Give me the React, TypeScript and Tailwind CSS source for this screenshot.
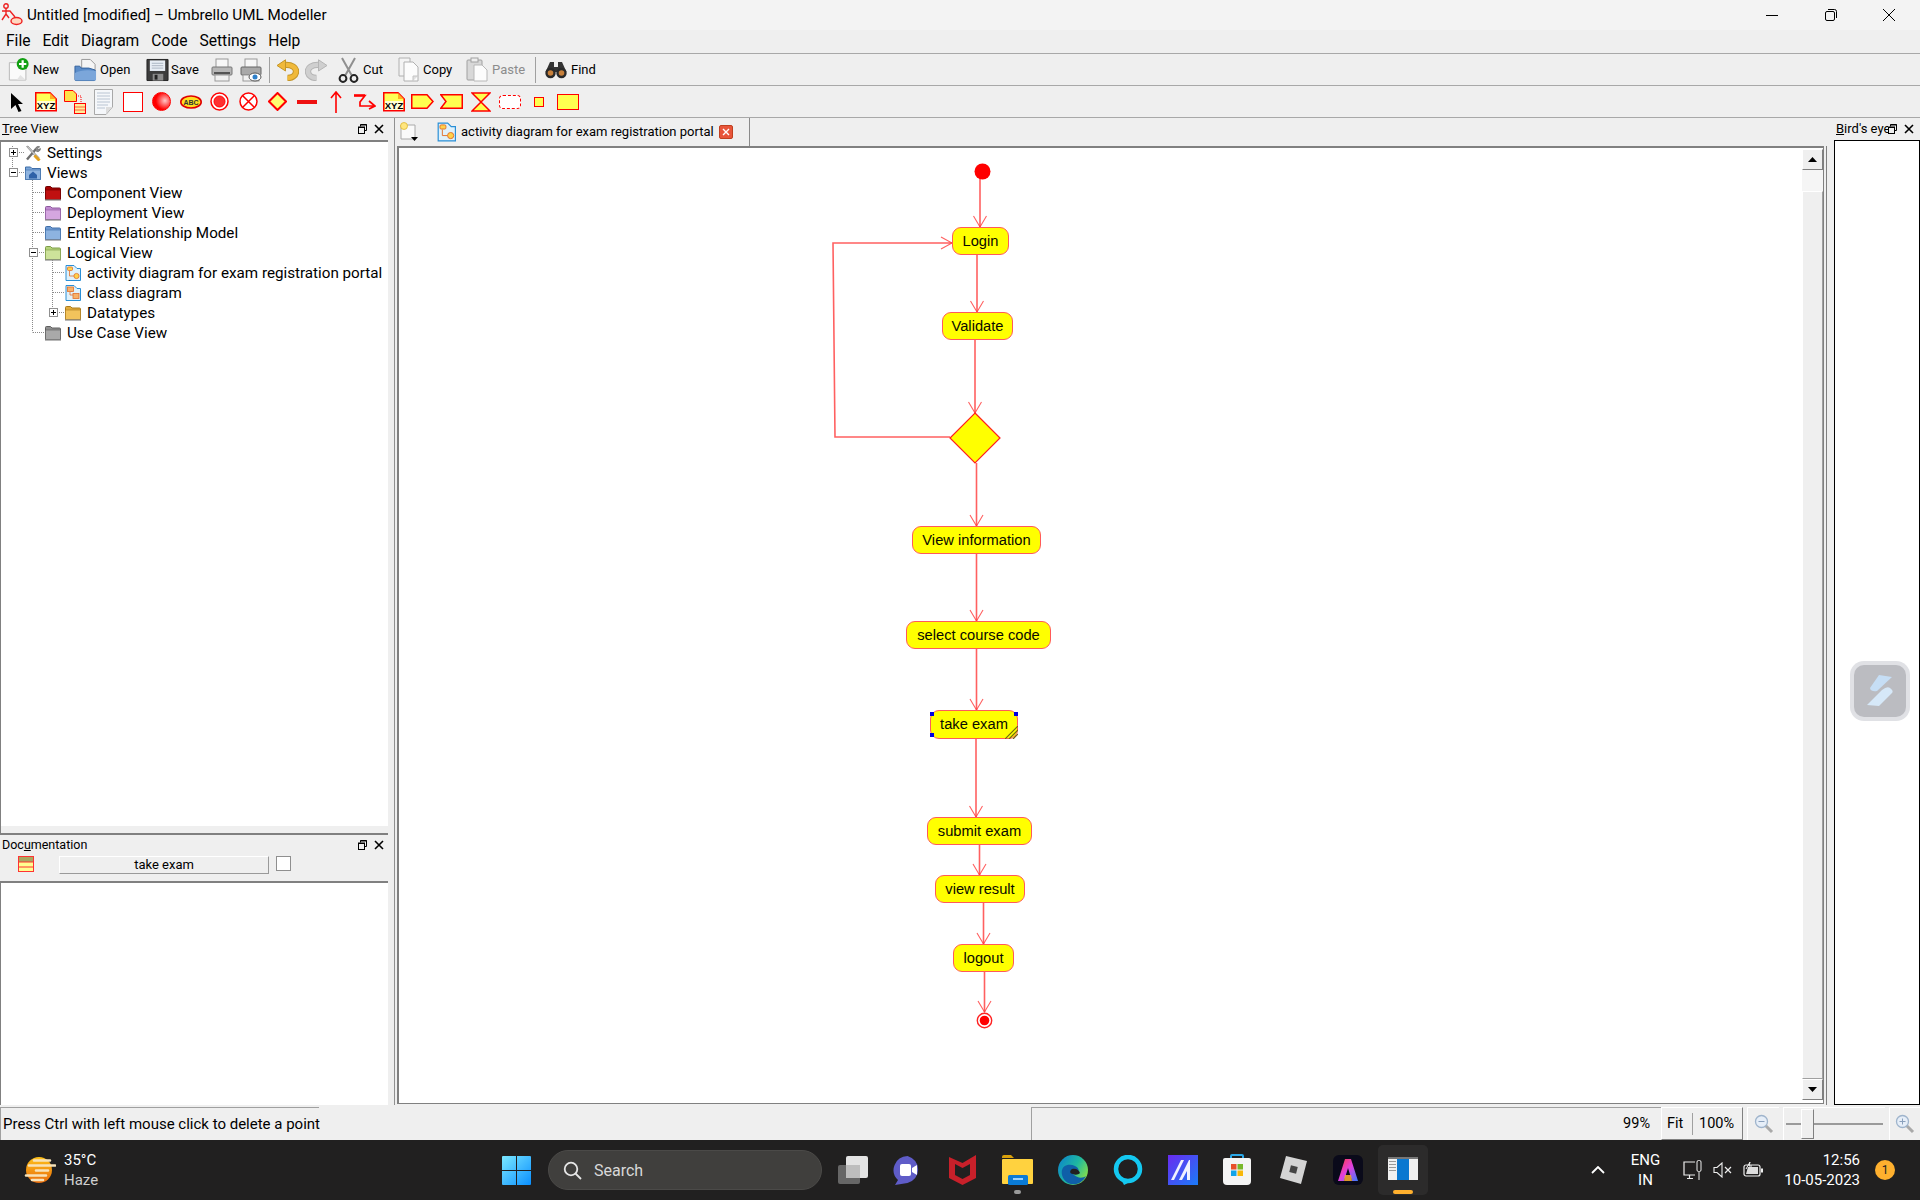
import React from "react";

const Folder = ({ back, front, line }: { back: string; front: string; line: string }) => (
  <svg width="16" height="16" viewBox="0 0 16 16" className="shrink-0">
    <path d="M0.5 2.5 a1 1 0 0 1 1-1 h4 l1.5 1.5 h7.5 a1 1 0 0 1 1 1 v10.5 h-15z" fill={back} stroke={line} strokeWidth="1" />
    <rect x="0.5" y="5" width="15" height="9.5" fill={front} stroke={line} strokeWidth="0.6" />
    <rect x="0" y="14" width="16" height="2" fill="#8a8a8a" opacity="0.6" />
  </svg>
);

const DiagIcon = ({ kind }: { kind: "a" | "c" }) => (
  <svg width="16" height="16" viewBox="0 0 16 16" className="shrink-0">
    <path d="M1 0.5 h8 l3 3 h3.5 v12 h-14.5z" fill="#dff1fb" stroke="#2a8fd6" strokeWidth="1" />
    {kind === "a" ? (
      <>
        <rect x="2.5" y="2" width="5" height="3.5" rx="1" fill="#ffd24a" stroke="#e2702a" strokeWidth="0.8" />
        <path d="M4.5 6 V11 H9" fill="none" stroke="#e2702a" strokeWidth="0.8" />
        <circle cx="11.5" cy="11" r="2.6" fill="#ffd24a" stroke="#e2702a" strokeWidth="0.8" />
      </>
    ) : (
      <>
        <rect x="2.5" y="2" width="6" height="4.5" fill="#f7b26a" stroke="#e2702a" strokeWidth="0.8" />
        <path d="M5 7 V10 H8" fill="none" stroke="#e2702a" strokeWidth="0.8" />
        <rect x="8" y="8.5" width="6" height="5" fill="#f7b26a" stroke="#e2702a" strokeWidth="0.8" />
      </>
    )}
  </svg>
);

const SettingsIcon = () => (
  <svg width="16" height="16" viewBox="0 0 16 16" className="shrink-0">
    <path d="M2 14.5 L11 4" stroke="#6f6f6f" strokeWidth="2.4" />
    <path d="M10.5 5.5 A3 3 0 0 1 14.8 1.8 L12.6 3.6 L13.2 4.6 L15.5 3.4 A3 3 0 0 1 11.5 6.5" fill="#8a8a8a" stroke="#555" strokeWidth="0.5" />
    <path d="M1.5 1.5 L3 1 L14 12.5 L12.5 14z" fill="#c8c8c8" stroke="#666" strokeWidth="0.5" />
    <path d="M9.5 10.5 L14.5 15.5" stroke="#e0a020" strokeWidth="3" />
  </svg>
);

const ViewsIcon = () => (
  <svg width="16" height="16" viewBox="0 0 16 16" className="shrink-0">
    <path d="M0.5 2 h5 l1.5 1.5 h8.5 v11 h-15z" fill="#7ca6d8" stroke="#3f6ea8" />
    <rect x="0.5" y="5" width="15" height="9.5" fill="#8fb4e0" stroke="#3f6ea8" strokeWidth="0.6" />
    <path d="M4 10 L8 6.5 L12 10 V13.5 H4z" fill="#2f62a8" />
  </svg>
);

const Sq = ({ minus, className }: { minus?: boolean; className: string }) => (
  <div className={`absolute w-[9px] h-[9px] bg-white border border-[#8f8f8f] ${className}`}>
    <div className="absolute left-[1px] top-[3px] w-[5px] h-[1px] bg-black" />
    {!minus && <div className="absolute left-[3px] top-[1px] w-[1px] h-[5px] bg-black" />}
  </div>
);

const TreeRow = ({ pad, icon, text }: { pad: string; icon: React.ReactNode; text: string }) => (
  <div className={`flex items-center h-[20px] gap-[6px] ${pad}`}>
    {icon}
    <span className="whitespace-nowrap">{text}</span>
  </div>
);

const DockBtns = () => (
  <div className="flex items-center gap-[7px]">
    <svg width="9" height="10" viewBox="0 0 9 10">
      <path d="M2.5 2.5 V0.5 H8.5 V6.5 H6.5" fill="none" stroke="#000" />
      <rect x="0.5" y="3" width="6" height="6.5" fill="none" stroke="#000" />
      <path d="M0 3.5 H7 M2.5 1 H9" stroke="#000" />
    </svg>
    <svg width="10" height="10" viewBox="0 0 10 10">
      <path d="M1 1 L9 9 M9 1 L1 9" stroke="#000" strokeWidth="1.6" />
    </svg>
  </div>
);

const I = {
  New: () => (
    <svg width="22" height="25" viewBox="0 0 24 26">
      <path d="M1.5 5.5 h12 l6 6 v13 h-18z" fill="#fafafa" stroke="#b5b5b5" />
      <path d="M13.5 19 l-4 5.5 h10" fill="#e3e3e3" />
      <circle cx="16" cy="7" r="6.5" fill="#12a012" />
      <path d="M16 3 v8 M12 7 h8" stroke="#fff" strokeWidth="2.4" />
    </svg>
  ),
  Open: () => (
    <svg width="23" height="24" viewBox="0 0 24 24">
      <path d="M8 1 h9 l5 5 v9 h-14z" fill="#f5f5f5" stroke="#999" />
      <path d="M1 8 h5 l1.5 2 h8 L22 12 v10 a1 1 0 0 1 -1 1 H2 a1 1 0 0 1 -1 -1z" fill="#5b8cc8" stroke="#2f5f9c" />
      <path d="M1 15 Q9 11 23 13 V22 a1 1 0 0 1 -1 1 H2 a1 1 0 0 1 -1 -1z" fill="#7ba6da" />
    </svg>
  ),
  Save: () => (
    <svg width="23" height="24" viewBox="0 0 24 24">
      <path d="M1 1 H23 V23 H1z" fill="#3c3c3c" stroke="#222" />
      <rect x="4" y="2" width="16" height="11" fill="#e8eef5" />
      <path d="M6 5 H18 M6 7.5 H18 M6 10 H18" stroke="#aab4c0" />
      <rect x="7" y="16" width="11" height="7" fill="#8c8c8c" />
      <rect x="9" y="17" width="3" height="5" fill="#222" />
    </svg>
  ),
  Print: () => (
    <svg width="22" height="24" viewBox="0 0 22 24">
      <rect x="5" y="1" width="12" height="9" fill="#f7f7f7" stroke="#9a9a9a" />
      <rect x="1" y="9" width="20" height="8" rx="1" fill="#b7b7b7" stroke="#777" />
      <rect x="3" y="14" width="16" height="2" fill="#555" />
      <rect x="4" y="17" width="14" height="6" fill="#f1f1f1" stroke="#9a9a9a" />
    </svg>
  ),
  Preview: () => (
    <svg width="22" height="24" viewBox="0 0 22 24">
      <rect x="5" y="1" width="12" height="9" fill="#f7f7f7" stroke="#9a9a9a" />
      <rect x="1" y="9" width="20" height="8" rx="1" fill="#a9a9a9" stroke="#666" />
      <rect x="3" y="17" width="16" height="6" fill="#f1f1f1" stroke="#9a9a9a" />
      <ellipse cx="15" cy="19" rx="6" ry="4" fill="#fff" stroke="#555" />
      <circle cx="15" cy="19" r="2.5" fill="#2f7fc8" />
    </svg>
  ),
  Undo: ({ c, d, flip }: { c: string; d: string; flip?: boolean }) => (
    <svg width="23" height="22" viewBox="0 0 23 22">
      <g transform={flip ? "translate(23 0) scale(-1 1)" : undefined}>
        <path d="M8 6 C16 5 20.5 9 20 13 C19.5 17 15.5 19 11.5 19" fill="none" stroke={d} strokeWidth="6.4" />
        <path d="M8 6 C16 5 20.5 9 20 13 C19.5 17 15.5 19 11.5 19" fill="none" stroke={c} strokeWidth="4.4" />
        <path d="M1 6.5 L9.5 0.8 V12 z" fill={c} stroke={d} strokeWidth="1" />
      </g>
    </svg>
  ),
  Cut: () => (
    <svg width="21" height="26" viewBox="0 0 21 26">
      <path d="M4 1 L13.5 18 M17 1 L7.5 18" stroke="#8f8f8f" strokeWidth="2" />
      <circle cx="5" cy="21.5" r="3.4" fill="none" stroke="#222" strokeWidth="2" />
      <circle cx="16" cy="21.5" r="3.4" fill="none" stroke="#222" strokeWidth="2" />
    </svg>
  ),
  Copy: () => (
    <svg width="21" height="25" viewBox="0 0 21 25">
      <path d="M1 1 H12 V19 H1z" fill="#f4f4f4" stroke="#b0b0b0" />
      <path d="M6 5 H15 L20 10 V24 H6z" fill="#fcfcfc" stroke="#b0b0b0" />
      <path d="M15 24 V19 H20" fill="#e0e0e0" stroke="#c4c4c4" />
    </svg>
  ),
  Paste: () => (
    <svg width="22" height="25" viewBox="0 0 22 25">
      <rect x="1" y="3" width="15" height="20" rx="1" fill="#d8d8d8" stroke="#a0a0a0" />
      <rect x="5" y="1" width="7" height="4" fill="#eee" stroke="#a0a0a0" />
      <path d="M8 8 H16 L21 13 V24 H8z" fill="#fcfcfc" stroke="#b8b8b8" />
    </svg>
  ),
  Find: () => (
    <svg width="22" height="18" viewBox="0 0 22 18">
      <path d="M5 1 H9 V6 H13 V1 H17 L21.5 11 H0.5z" fill="#333" />
      <circle cx="5.5" cy="12" r="5.2" fill="#2a2a2a" />
      <circle cx="16.5" cy="12" r="5.2" fill="#2a2a2a" />
      <circle cx="5.5" cy="12" r="2.8" fill="#c8803a" />
      <circle cx="16.5" cy="12" r="2.8" fill="#c8803a" />
    </svg>
  ),
};

const Sep = ({ w }: { w: string }) => (
  <div className={`flex justify-start ${w}`}>
    <div className="w-[1px] h-[26px] bg-[#a0a0a0]" />
  </div>
);

const TB = ({ w, gap, icon, label, muted }: { w: string; gap?: string; icon: React.ReactNode; label?: string; muted?: boolean }) => (
  <div className={`flex items-center shrink-0 ${gap ?? "gap-[4px]"} ${w}`}>
    {icon}
    {label && <span className={muted ? "text-[#8c8c8c] text-[13px]" : "text-[13px]"}>{label}</span>}
  </div>
);

const Xyz = () => (
  <svg width="22" height="20" viewBox="0 0 22 20">
    <path d="M0.75 0.75 H15 L21.25 7 V18.75 H0.75z" fill="#ffff55" stroke="#f00" strokeWidth="1.5" />
    <path d="M15 1 L21 7 H15z" fill="#ffb020" />
    <rect x="2" y="9" width="18" height="9" fill="#fff" opacity="0.75" />
    <text x="11" y="17.2" textAnchor="middle" fontSize="9.5" fontWeight="700" fontFamily="Liberation Sans" fill="#000">XYZ</text>
  </svg>
);

const shapes: React.ReactNode[] = [
  <svg width="14" height="20" viewBox="0 0 14 20"><path d="M1 1 L13 12 H8 L11.5 19 L8.5 20 L5.5 13 L1 17z" fill="#000" /></svg>,
  <Xyz />,
  <svg width="22" height="24" viewBox="0 0 22 24">
    <path d="M0.5 0.5 H9 L12.5 4 V11.5 H0.5z" fill="#ffe24a" stroke="#f00" />
    <path d="M12 6 H17 V13" fill="none" stroke="#f00" strokeDasharray="1 1" />
    <rect x="10.5" y="13.5" width="11" height="10" fill="#ffee99" stroke="#f00" />
    <path d="M11 17 H21 M11 20 H21" stroke="#f00" strokeWidth="0.6" />
  </svg>,
  <svg width="19" height="26" viewBox="0 0 19 26">
    <path d="M0.5 0.5 H18.5 V18 L12 25.5 H0.5z" fill="#f5f7fa" stroke="#a8a8a8" />
    <path d="M3 4 H16 M3 7 H16 M3 10 H16 M3 13 H16 M3 16 H14 M3 19 H11" stroke="#b9c4d2" />
    <path d="M12 25 V18 H18.5z" fill="#ddd" />
  </svg>,
  <div className="w-[20px] h-[20px] border border-[#f00] bg-white" />,
  <div className="w-[19px] h-[19px] rounded-full bg-[radial-gradient(circle_at_70%_45%,#ffc8c8,#ff0000_60%)] border border-[#f00]" />,
  <svg width="22" height="14" viewBox="0 0 22 14">
    <ellipse cx="11" cy="7" rx="10.2" ry="6" fill="#ffdf20" stroke="#e00000" strokeWidth="1.6" />
    <text x="11" y="9.7" textAnchor="middle" fontSize="7" fontWeight="700" fontFamily="Liberation Sans" fill="#333">ABC</text>
  </svg>,
  <svg width="19" height="19" viewBox="0 0 19 19">
    <circle cx="9.5" cy="9.5" r="8.5" fill="#fff" stroke="#f00" strokeWidth="1.5" />
    <circle cx="9.5" cy="9.5" r="5.5" fill="#ff3030" stroke="#f00" />
  </svg>,
  <svg width="19" height="19" viewBox="0 0 19 19">
    <circle cx="9.5" cy="9.5" r="8.5" fill="#fff" stroke="#f00" strokeWidth="1.5" />
    <path d="M3.5 3.5 L15.5 15.5 M15.5 3.5 L3.5 15.5" stroke="#f00" strokeWidth="1.5" />
  </svg>,
  <svg width="19" height="19" viewBox="0 0 19 19">
    <path d="M9.5 1 L18 9.5 L9.5 18 L1 9.5z" fill="#ffff70" stroke="#f00" strokeWidth="2" />
  </svg>,
  <div className="w-[20px] h-[4px] bg-[#ee1111]" />,
  <svg width="12" height="22" viewBox="0 0 12 22"><path d="M6 1 V22 M1 7 L6 1 L11 7" fill="none" stroke="#f00" strokeWidth="1.6" /></svg>,
  <svg width="23" height="16" viewBox="0 0 23 16"><path d="M1 1.5 H12 L7 8 V12 H21 M16 7 L22 12 L16 15" fill="none" stroke="#f00" strokeWidth="1.7" /><path d="M1 1.5 H12" stroke="#f00" strokeWidth="2.5" /></svg>,
  <Xyz />,
  <svg width="23" height="15" viewBox="0 0 23 15"><path d="M0.75 0.75 H16 L22 7.5 L16 14.25 H0.75z" fill="#ffff50" stroke="#f00" strokeWidth="1.5" /></svg>,
  <svg width="23" height="15" viewBox="0 0 23 15"><path d="M0.75 0.75 H22.25 V14.25 H0.75 L6 7.5z" fill="#ffff50" stroke="#f00" strokeWidth="1.5" /></svg>,
  <svg width="20" height="20" viewBox="0 0 20 20"><path d="M1 1 H19 L10 10 L19 19 H1 L10 10z" fill="#ffff50" stroke="#f00" strokeWidth="1.5" /></svg>,
  <div className="w-[22px] h-[14px] border border-dashed border-[#f00] rounded-[4px] bg-white" />,
  <div className="w-[10px] h-[10px] border border-[#f00] bg-[#ffff50]" />,
  <div className="w-[22px] h-[16px] border-[1.5px] border-[#f00] bg-[#ffff50]" />,
];

const ox = 399;
const oy = 148;
const nodes = [
  { t: "Login", x: 952, y: 227, w: 57, h: 28 },
  { t: "Validate", x: 942, y: 312, w: 71, h: 28 },
  { t: "View information", x: 912, y: 526, w: 129, h: 28 },
  { t: "select course code", x: 906, y: 621, w: 145, h: 28 },
  { t: "take exam", x: 930, y: 710, w: 88, h: 29, sel: true },
  { t: "submit exam", x: 927, y: 817, w: 105, h: 28 },
  { t: "view result", x: 935, y: 875, w: 90, h: 28 },
  { t: "logout", x: 953, y: 944, w: 61, h: 28 },
];
const edges: [number, number, number, number][] = [
  [980, 179, 980, 227],
  [977, 255, 977, 312],
  [975, 340, 975, 413],
  [976.5, 463, 976.5, 526],
  [976.5, 554, 976.5, 621],
  [976.5, 649, 976.5, 710],
  [976, 739, 976, 817],
  [979.5, 845, 979.5, 875],
  [983.5, 903, 983.5, 944],
  [984.5, 972, 984.5, 1012],
];

const Diagram = () => (
  <>
    <svg className="absolute left-0 top-0" width="1410" height="960" viewBox={`${ox} ${oy} 1410 960`}>
      <g fill="none" stroke="#ff3838" strokeWidth="1.6" strokeOpacity="0.8">
        {edges.map(([a, b, c, d], i) => (
          <g key={i}>
            <path d={`M${a} ${b} L${c} ${d}`} />
            <path d={`M${c - 6.5} ${d - 11} L${c} ${d} L${c + 6.5} ${d - 11}`} strokeWidth="1.1" />
          </g>
        ))}
        <path d="M950 437 H835 L833 243 H952" />
        <path d="M941 237 L952 243 L941 249" strokeWidth="1.1" />
      </g>
      <circle cx="982.5" cy="171.5" r="8" fill="#f00" />
      <path d="M975 413 L1000 438 L975 463 L950 438z" fill="#ff0" stroke="#ff2020" strokeWidth="1.2" />
      <circle cx="984.5" cy="1020.5" r="7.2" fill="#fff" stroke="#f22" strokeWidth="1.4" />
      <circle cx="984.5" cy="1020.5" r="4.8" fill="#f00" />
    </svg>
    {nodes.map((n) => (
      <div
        key={n.t}
        className="absolute flex items-center justify-center rounded-[9px] bg-[#ffff00] border-[1.5px] border-[#ff5a5a] text-[14.7px] text-[#0a0a00] font-['Liberation_Sans',sans-serif]"
        style={{ left: n.x - ox, top: n.y - oy, width: n.w, height: n.h }}
      >
        {n.t}
        {n.sel && (
          <>
            <div className="absolute left-[-1px] top-[1px] w-[4px] h-[4px] bg-[#0000e0]" />
            <div className="absolute left-[-1px] bottom-[1px] w-[4px] h-[4px] bg-[#0000e0]" />
            <div className="absolute right-[-1px] top-[1px] w-[4px] h-[4px] bg-[#0000e0]" />
            <svg className="absolute right-[-1px] bottom-[-1px]" width="13" height="13" viewBox="0 0 13 13">
              <path d="M0 13 L13 0 M4 13 L13 4 M8 13 L13 8" stroke="#6e6a10" strokeWidth="1.2" />
            </svg>
          </>
        )}
      </div>
    ))}
  </>
);

const ZoomGlass = ({ plus }: { plus?: boolean }) => (
  <svg width="20" height="20" viewBox="0 0 20 20">
    <path d="M11 11 L18 18" stroke="#a9a9a9" strokeWidth="3" />
    <circle cx="7.5" cy="7.5" r="6" fill="#e6eef8" stroke="#9fb4cc" strokeWidth="1.3" />
    <path d="M4.5 7.5 H10.5" stroke="#8aa0bc" />
    {plus && <path d="M7.5 4.5 V10.5" stroke="#8aa0bc" />}
  </svg>
);

export default function App() {
  return (
    <div className="relative w-[1920px] h-[1200px] overflow-hidden flex flex-col bg-[#efefef] text-black text-[15.2px] font-['Roboto',sans-serif]">
      {/* Title bar */}
      <div className="h-[30px] bg-[#f3f3f3] flex items-center shrink-0">
        <svg className="ml-[1px]" width="22" height="24" viewBox="0 0 22 24">
          <g fill="none" stroke="#ee2222" strokeWidth="1.4">
            <circle cx="5" cy="3" r="2.2" />
            <path d="M5 5 V11 L1 17 M5 11 L8 15 M1 8 H9 L14 14" />
            <ellipse cx="15.5" cy="18" rx="5.5" ry="3.5" fill="#ffd8c0" />
          </g>
        </svg>
        <span className="ml-[4px] whitespace-nowrap">Untitled [modified] – Umbrello UML Modeller</span>
        <div className="ml-auto flex items-center">
          <div className="w-[58px] flex justify-center">
            <div className="w-[12px] h-[1px] bg-black" />
          </div>
          <div className="w-[59px] flex justify-center">
            <svg width="12" height="12" viewBox="0 0 12 12">
              <rect x="0.5" y="2.5" width="9" height="9" rx="1.5" fill="none" stroke="#000" />
              <path d="M3 0.5 H9.5 A2 2 0 0 1 11.5 2.5 V9" fill="none" stroke="#000" />
            </svg>
          </div>
          <div className="w-[60px] flex justify-center pr-[3px]">
            <svg width="12" height="12" viewBox="0 0 12 12">
              <path d="M0 0 L12 12 M12 0 L0 12" stroke="#000" />
            </svg>
          </div>
        </div>
      </div>

      {/* Menu */}
      <div className="h-[24px] shrink-0 flex items-center pl-[6px] gap-[12px] border-b border-[#a8a8a8] text-[15.6px]">
        {["File", "Edit", "Diagram", "Code", "Settings", "Help"].map((m) => (
          <span key={m}>{m}</span>
        ))}
      </div>

      {/* Main toolbar */}
      <div className="h-[32px] shrink-0 flex items-center pl-[8px] border-b border-[#a8a8a8]">
        <TB w="w-[66px]" gap="gap-[3px]" icon={<I.New />} label="New" />
        <TB w="w-[72px]" gap="gap-[3px]" icon={<I.Open />} label="Open" />
        <TB w="w-[65px]" gap="gap-[2px]" icon={<I.Save />} label="Save" />
        <TB w="w-[29px]" icon={<I.Print />} />
        <TB w="w-[29px]" icon={<I.Preview />} />
        <Sep w="w-[7px]" />
        <TB w="w-[29px]" icon={<I.Undo c="#f0b93a" d="#c4962a" />} />
        <TB w="w-[33px]" icon={<I.Undo c="#cfcfcf" d="#b5b5b5" flip />} />
        <TB w="w-[60px]" icon={<I.Cut />} label="Cut" />
        <TB w="w-[68px]" icon={<I.Copy />} label="Copy" />
        <TB w="w-[69px]" icon={<I.Paste />} label="Paste" muted />
        <Sep w="w-[10px]" />
        <TB w="w-[60px]" icon={<I.Find />} label="Find" />
      </div>

      {/* Widget toolbar */}
      <div className="h-[32px] shrink-0 flex items-center pl-[2px] border-b border-[#a8a8a8]">
        {shapes.map((s, i) => (
          <div key={i} className="w-[29px] h-[28px] flex items-center justify-center shrink-0">
            {s}
          </div>
        ))}
      </div>

      {/* Work area */}
      <div className="flex-1 min-h-0 flex">
        {/* Left dock */}
        <div className="w-[388px] shrink-0 flex flex-col">
          <div className="h-[22px] shrink-0 flex items-center justify-between pl-[2px] pr-[4px] text-[13px]">
            <span><u>T</u>ree View</span>
            <DockBtns />
          </div>
          <div className="relative h-[686px] shrink-0 bg-white border-t-2 border-l border-t-[#808080] border-l-[#808080] pt-[1px]">
            <svg className="absolute left-0 top-0" width="120" height="200" viewBox="0 0 120 200">
              <path
                d="M11.5 4 V30 M16 10.5 H23 M16 30.5 H23 M31.5 34 V190.5 M32 50.5 H44 M32 70.5 H44 M32 90.5 H44 M36 110.5 H44 M32 190.5 H44 M51.5 118 V170 M52 130.5 H63 M52 150.5 H63 M56 170.5 H63"
                fill="none"
                stroke="#8a8a8a"
                strokeDasharray="1 1"
              />
            </svg>
            <Sq className="left-[8px] top-[6px]" />
            <Sq minus className="left-[8px] top-[26px]" />
            <Sq minus className="left-[28px] top-[106px]" />
            <Sq className="left-[48px] top-[166px]" />
            <div className="relative">
              <TreeRow pad="pl-[24px]" icon={<SettingsIcon />} text="Settings" />
              <TreeRow pad="pl-[24px]" icon={<ViewsIcon />} text="Views" />
              <TreeRow pad="pl-[44px]" icon={<Folder back="#a80000" front="#c01010" line="#6d0000" />} text="Component View" />
              <TreeRow pad="pl-[44px]" icon={<Folder back="#c08ad0" front="#d5a6e0" line="#8d5a9e" />} text="Deployment View" />
              <TreeRow pad="pl-[44px]" icon={<Folder back="#6f9bd2" front="#8db3e0" line="#3f6ea8" />} text="Entity Relationship Model" />
              <TreeRow pad="pl-[44px]" icon={<Folder back="#b4d27a" front="#cde29a" line="#7d9c48" />} text="Logical View" />
              <TreeRow pad="pl-[64px]" icon={<DiagIcon kind="a" />} text="activity diagram for exam registration portal" />
              <TreeRow pad="pl-[64px]" icon={<DiagIcon kind="c" />} text="class diagram" />
              <TreeRow pad="pl-[64px]" icon={<Folder back="#e2ab3c" front="#f2c35c" line="#a87a1e" />} text="Datatypes" />
              <TreeRow pad="pl-[44px]" icon={<Folder back="#8f8f8f" front="#a9a9a9" line="#5f5f5f" />} text="Use Case View" />
            </div>
          </div>
          <div className="h-[7px] shrink-0 border-l border-[#808080]" />
          <div className="h-[22px] shrink-0 border-t-2 border-[#808080] flex items-center justify-between pl-[2px] pr-[4px] text-[12.5px]">
            <span>Doc<u>u</u>mentation</span>
            <DockBtns />
          </div>
          <div className="h-[26px] shrink-0 flex items-start pt-[1px] pl-[18px]">
            <svg width="16" height="16" viewBox="0 0 16 16">
              <rect x="0.5" y="0.5" width="15" height="15" fill="#ffff90" stroke="#f33" />
              <rect x="1" y="1" width="14" height="5" fill="#a8a860" />
              <path d="M0 6 H16 M0 11 H16" stroke="#f33" />
            </svg>
            <div className="ml-[25px] w-[210px] h-[18px] flex items-center justify-center border border-t-white border-l-white border-r-[#9a9a9a] border-b-[#9a9a9a] text-[13px]">
              take exam
            </div>
            <div className="ml-[7px] w-[15px] h-[15px] bg-white border border-[#8f8f8f]" />
          </div>
          <div className="flex-1 bg-white border-t-2 border-l border-t-[#808080] border-l-[#808080]" />
        </div>

        {/* Splitter */}
        <div className="w-[6px] shrink-0" />

        {/* Centre */}
        <div className="w-[1433px] shrink-0 flex flex-col border-l border-[#909090]">
          <div className="h-[28px] shrink-0 flex items-stretch">
            <div className="w-[40px] flex items-center pl-[5px]">
              <svg width="18" height="20" viewBox="0 0 18 20">
                <path d="M1 3 H15 V17 H1z" fill="#fafafa" stroke="#aaa" />
                <circle cx="4" cy="4" r="3.5" fill="#ffe680" stroke="#d8b020" strokeWidth="0.7" />
                <path d="M11 15 H18 L14.5 19z" fill="#000" />
              </svg>
            </div>
            <div className="flex items-center gap-[5px] pl-[2px] w-[315px] border-r border-[#8a8a8a]">
              <svg width="19" height="20" viewBox="0 0 16 16"><path d="M1 0.5 h8 l3 3 h3.5 v12 h-14.5z" fill="#dff1fb" stroke="#2a8fd6" /><rect x="2.5" y="2" width="5" height="3.5" rx="1" fill="#ffd24a" stroke="#e2702a" strokeWidth="0.8" /><path d="M4.5 6 V11 H9" fill="none" stroke="#e2702a" strokeWidth="0.8" /><circle cx="11.5" cy="11" r="2.6" fill="#ffd24a" stroke="#e2702a" strokeWidth="0.8" /></svg>
              <span className="whitespace-nowrap text-[13px]">activity diagram for exam registration portal</span>
              <div className="w-[14px] h-[14px] rounded-[2px] bg-[#e8553a] border border-[#c04020] flex items-center justify-center">
                <svg width="8" height="8" viewBox="0 0 8 8"><path d="M1 1 L7 7 M7 1 L1 7" stroke="#fff" strokeWidth="1.4" /></svg>
              </div>
            </div>
          </div>
          <div className="flex-1 min-h-0 flex border-r border-[#808080] pl-[2px] pr-[2px] pb-[1px]">
            <div className="flex-1 min-w-0 flex bg-white border-t-2 border-l-2 border-b border-r border-[#808080]">
              <div className="relative flex-1 overflow-hidden">
                <Diagram />
              </div>
              <div className="w-[21px] shrink-0 flex flex-col pb-[3px] pt-[1px] bg-white">
                <div className="h-[21px] shrink-0 flex items-center justify-center bg-[#efefef] border border-t-white border-l-white border-r-[#808080] border-b-[#808080]">
                  <svg width="9" height="5" viewBox="0 0 9 5"><path d="M4.5 0 L9 5 H0z" fill="#000" /></svg>
                </div>
                <div className="h-[21px] shrink-0 bg-[#f5f5f5]" />
                <div className="flex-1 bg-[#efefef] border border-t-white border-l-white border-r-[#a0a0a0] border-b-[#a0a0a0]" />
                <div className="h-[21px] shrink-0 flex items-center justify-center bg-[#efefef] border border-t-white border-l-white border-r-[#808080] border-b-[#808080]">
                  <svg width="9" height="5" viewBox="0 0 9 5"><path d="M4.5 5 L9 0 H0z" fill="#000" /></svg>
                </div>
              </div>
            </div>
          </div>
        </div>

        <div className="w-[7px] shrink-0" />

        {/* Right dock */}
        <div className="flex-1 min-w-0 flex flex-col">
          <div className="h-[22px] shrink-0 flex items-center pl-[2px] pr-[3px] text-[13px]">
            <span className="w-[52px] overflow-hidden whitespace-nowrap"><u>B</u>ird's eye</span>
            <DockBtns />
          </div>
          <div className="flex-1 bg-white border border-black" />
        </div>
      </div>

      {/* Status bar */}
      <div className="mt-[2px] h-[33px] shrink-0 flex items-stretch text-[15px]">
        <div className="w-[319px] shrink-0 flex items-center pl-[2px] border-t border-l border-[#a0a0a0] whitespace-nowrap">
          Press Ctrl with left mouse click to delete a point
        </div>
        <div className="w-[712px] shrink-0" />
        <div className="w-[630px] shrink-0 flex items-center justify-end border-l border-t border-[#a0a0a0] pr-[11px] text-[14.5px]">
          99%
        </div>
        <div className="w-[82px] shrink-0 flex items-center border border-t-white border-l-white border-r-[#808080] border-b-[#808080] text-[14.5px]">
          <span className="pl-[5px] w-[30px]">Fit</span>
          <div className="w-[1px] h-[22px] bg-[#a0a0a0]" />
          <span className="pl-[6px]">100%</span>
        </div>
        <div className="ml-[4px] w-[32px] shrink-0 flex items-center justify-center border-l border-t border-white">
          <ZoomGlass />
        </div>
        <div className="ml-[4px] w-[102px] shrink-0 relative border-l border-t border-white flex items-center px-[2px]">
          <div className="w-full h-[2px] bg-[#9a9a9a]" />
          <div className="absolute left-[17px] top-[1px] w-[13px] h-[30px] bg-[#efefef] border border-t-white border-l-white border-r-[#808080] border-b-[#808080]" />
        </div>
        <div className="ml-[4px] flex-1 flex items-center justify-center border-l border-t border-white">
          <ZoomGlass plus />
        </div>
      </div>

      {/* Taskbar */}
      <div className="h-[60px] shrink-0 bg-[#212020] flex items-center text-white">
        <svg className="ml-[24px]" width="32" height="28" viewBox="0 0 32 28">
          <defs>
            <linearGradient id="sun" x1="0" y1="0" x2="0" y2="1"><stop offset="0" stopColor="#ffc21a" /><stop offset="1" stopColor="#e86a0a" /></linearGradient>
          </defs>
          <circle cx="15" cy="14" r="13" fill="url(#sun)" />
          <path d="M10 4.5 H26 M5 9.5 H31 M12 14.5 H24 M2 19.5 H22 M8 24 H19" stroke="#f7e2b8" strokeWidth="2.6" strokeLinecap="round" />
        </svg>
        <div className="ml-[8px] w-[60px] flex flex-col text-[15px] leading-[20px]">
          <span>35°C</span>
          <span className="text-[#cfcfcf]">Haze</span>
        </div>
        <svg className="ml-[378px]" width="29" height="29" viewBox="0 0 29 29">
          <defs>
            <linearGradient id="win" x1="0" y1="0" x2="1" y2="1"><stop offset="0" stopColor="#7be8ff" /><stop offset="1" stopColor="#0a8fff" /></linearGradient>
          </defs>
          <path d="M0 1 a1 1 0 0 1 1-1 H14 V14 H0z M15 0 H28 a1 1 0 0 1 1 1 V14 H15z M0 15 H14 V29 H1 a1 1 0 0 1 -1 -1z M15 15 H29 V28 a1 1 0 0 1 -1 1 H15z" fill="url(#win)" />
        </svg>
        <div className="ml-[17px] w-[274px] h-[40px] rounded-full bg-[#403f3d] border border-[#4b4a48] flex items-center pl-[14px] gap-[12px]">
          <svg width="19" height="19" viewBox="0 0 19 19"><circle cx="8" cy="8" r="6.3" fill="none" stroke="#e6e6e6" strokeWidth="1.8" /><path d="M12.5 12.5 L18 18" stroke="#e6e6e6" strokeWidth="1.8" /></svg>
          <span className="text-[16px] text-[#d8d8d8] pt-[1px]">Search</span>
        </div>
        {/* task view */}
        <svg className="ml-[16px]" width="30" height="28" viewBox="0 0 30 28">
          <rect x="0" y="9" width="22" height="19" rx="2" fill="#666" />
          <rect x="8" y="0" width="22" height="22" rx="2" fill="#f4f4f4" opacity="0.92" />
          <rect x="8" y="9" width="14" height="13" fill="#bdbdbd" />
        </svg>
        {/* meet */}
        <svg className="ml-[25px]" width="29" height="29" viewBox="0 0 29 29">
          <path d="M14.5 0 A14.5 14 0 0 1 14.5 27 L2 29 L5 24 A14.5 14 0 0 1 14.5 0z" fill="#5f5cc8" />
          <rect x="7" y="8" width="11" height="12" rx="2" fill="#fff" />
          <path d="M19 12 L24 9 V19 L19 16z" fill="#fff" />
        </svg>
        {/* mcafee */}
        <svg className="ml-[27px]" width="27" height="30" viewBox="0 0 27 30">
          <path d="M0 2 L13.5 8 L27 0 V23 L13.5 30 L0 23z" fill="#c8202a" />
          <path d="M6 9 L13.5 13 L21 9 V20 L13.5 24 L6 20z" fill="#212020" />
        </svg>
        {/* explorer */}
        <div className="relative ml-[26px] w-[31px] h-[30px]">
          <svg width="31" height="30" viewBox="0 0 31 30">
            <path d="M0 2 a2 2 0 0 1 2-2 H9 L12 3 H0z" fill="#d9a00a" />
            <rect x="0" y="4" width="31" height="25" rx="1" fill="#ffd23f" />
            <rect x="6" y="20" width="20" height="10" rx="1.5" fill="#0a7bd6" />
            <rect x="11" y="23" width="10" height="2" fill="#9ad2ff" />
          </svg>
          <div className="absolute left-[12px] top-[35px] w-[7px] h-[4px] rounded-full bg-[#9a9a9a]" />
        </div>
        {/* edge */}
        <svg className="ml-[25px]" width="30" height="30" viewBox="0 0 30 30">
          <defs>
            <linearGradient id="edge" x1="0" y1="0" x2="1" y2="0.6"><stop offset="0" stopColor="#0a7fd0" /><stop offset="0.6" stopColor="#1fb8a0" /><stop offset="1" stopColor="#7fdc50" /></linearGradient>
          </defs>
          <circle cx="15" cy="15" r="15" fill="url(#edge)" />
          <path d="M4 20 C2 10 11 8 17 11 C23 14 21 19 15 19 C20 24 25 23 28 21 C24 29 16 31 10 28 C7 26 5 24 4 20z" fill="#0f5fa8" />
          <path d="M15 19 C12 19 11 16 14 14 C18 13 21 15 22 18 C20 20 17 20 15 19z" fill="#212020" />
        </svg>
        {/* alexa */}
        <svg className="ml-[25px]" width="30" height="30" viewBox="0 0 30 30">
          <circle cx="15" cy="14" r="12" fill="none" stroke="#14c8f0" strokeWidth="4.5" />
          <path d="M8 24 L11 30 L17 27z" fill="#14c8f0" />
        </svg>
        {/* M tile */}
        <div className="ml-[25px] w-[30px] h-[30px] bg-[linear-gradient(135deg,#6a2af0,#1a7cf8)] flex items-center justify-center">
          <svg width="24" height="20" viewBox="0 0 24 20"><path d="M0 20 L10 0 H13 L3 20z M8 20 L18 0 H19 V20 H16 V11 L11 20z" fill="#fff" opacity="0.92" /></svg>
        </div>
        {/* store */}
        <svg className="ml-[25px]" width="28" height="32" viewBox="0 0 28 32">
          <path d="M8 5 V2 a1 1 0 0 1 1-1 H19 a1 1 0 0 1 1 1 V5" fill="none" stroke="#2aa8e8" strokeWidth="2" />
          <path d="M0 6 a2 2 0 0 1 2-2 H26 a2 2 0 0 1 2 2 V27 a4 4 0 0 1 -4 4 H4 a4 4 0 0 1 -4 -4z" fill="#f4f4f4" />
          <rect x="8" y="10" width="5.5" height="5.5" fill="#e8502a" />
          <rect x="14.5" y="10" width="5.5" height="5.5" fill="#78b82a" />
          <rect x="8" y="16.5" width="5.5" height="5.5" fill="#12a4e8" />
          <rect x="14.5" y="16.5" width="5.5" height="5.5" fill="#f8b80a" />
        </svg>
        {/* roblox */}
        <svg className="ml-[29px]" width="27" height="28" viewBox="0 0 27 28">
          <path d="M6 0 L27 5 L21 28 L0 22z" fill="#d4d4d4" />
          <rect x="10" y="10" width="7" height="7" fill="#444" transform="rotate(14 13.5 13.5)" />
        </svg>
        {/* adobe */}
        <div className="ml-[26px] w-[30px] h-[30px] rounded-[6px] bg-[#0a0a1a] flex items-center justify-center">
          <svg width="20" height="22" viewBox="0 0 20 22">
            <defs>
              <linearGradient id="ado" x1="0" y1="0" x2="1" y2="1"><stop offset="0" stopColor="#ff3b3b" /><stop offset="0.5" stopColor="#e040e0" /><stop offset="1" stopColor="#3a7cff" /></linearGradient>
            </defs>
            <path d="M7 0 H13 L20 22 H14 L10 9 L6 22 H0z" fill="url(#ado)" />
            <path d="M7 16 H13 L14 22 H6z" fill="#ffb02e" opacity="0.85" />
          </svg>
        </div>
        {/* active app */}
        <div className="relative ml-[15px] w-[50px] h-[50px] rounded-[5px] bg-[#2c2b2b] flex items-center justify-center">
          <div className="w-[30px] h-[23px] mb-[4px] bg-[#f0f0f0] border-t-2 border-[#777] flex">
            <div className="w-[9px] flex flex-col gap-[2px] p-[1px] pt-[2px]">
              <div className="h-[1px] bg-[#999]" />
              <div className="h-[1px] bg-[#999]" />
              <div className="h-[1px] bg-[#999]" />
              <div className="h-[1px] bg-[#999]" />
            </div>
            <div className="w-[12px] bg-[#0a78d0]" />
          </div>
          <div className="absolute left-[15px] bottom-[1px] w-[20px] h-[4px] rounded-full bg-[#ffb02e]" />
        </div>
        <svg className="ml-[163px]" width="14" height="8" viewBox="0 0 14 8"><path d="M1 7 L7 1 L13 7" fill="none" stroke="#fff" strokeWidth="1.8" /></svg>
        <div className="ml-[26px] w-[29px] flex flex-col items-center text-[15px] leading-[20px]">
          <span>ENG</span>
          <span>IN</span>
        </div>
        <svg className="ml-[23px]" width="19" height="21" viewBox="0 0 19 21">
          <path d="M12 2 H1 V15 H12" fill="none" stroke="#eee" strokeWidth="1.2" />
          <path d="M4 18.5 H10 M6.5 15 V18.5" stroke="#eee" strokeWidth="1.2" />
          <rect x="14" y="0.5" width="4" height="11" rx="1.5" fill="none" stroke="#eee" />
          <path d="M16 12 V20" stroke="#eee" />
        </svg>
        <svg className="ml-[11px]" width="19" height="16" viewBox="0 0 19 16">
          <path d="M1 5.5 H4 L9 1 V15 L4 10.5 H1z" fill="none" stroke="#eee" strokeWidth="1.1" />
          <path d="M12 5 L18 11 M18 5 L12 11" stroke="#eee" strokeWidth="1.2" />
        </svg>
        <svg className="ml-[11px]" width="20" height="18" viewBox="0 0 20 18">
          <rect x="1" y="4" width="16" height="11" rx="2" fill="none" stroke="#eee" strokeWidth="1.2" />
          <rect x="18" y="7.5" width="2" height="4" fill="#eee" />
          <path d="M3 13 L5 6 H15 V13z" fill="#ddd" />
          <path d="M3 8 L7 1 L6 5 H9" fill="none" stroke="#eee" />
        </svg>
        <div className="w-[97px] flex flex-col items-end text-[15px] leading-[20px]">
          <span>12:56</span>
          <span>10-05-2023</span>
        </div>
        <div className="ml-[15px] w-[20px] h-[20px] rounded-full bg-[#ffb02e] text-[#222] text-[12px] flex items-center justify-center">
          1
        </div>
      </div>

      {/* Floating widget over the dock */}
      <div className="absolute left-[1850px] top-[661px] w-[60px] h-[60px] rounded-[14px] bg-[#e0e1e5] p-[4px]">
        <div className="w-full h-full rounded-[10px] bg-[#bbbcc1] flex items-center justify-center">
          <svg width="28" height="34" viewBox="0 0 28 34">
            <path d="M13 1 L26 3 L11 17 Q5 18 4 14z" fill="#c6def5" />
            <path d="M24 14 Q28 17 26 19 L13 32 L1 31 L16 16 Q21 12 24 14z" fill="#d6e8f8" />
          </svg>
        </div>
      </div>
    </div>
  );
}
